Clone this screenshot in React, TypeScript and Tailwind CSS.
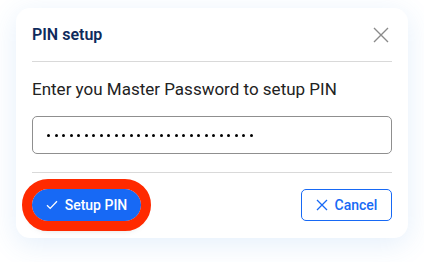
export default function App() {
  const dots = Array.from({ length: 28 });
  return (
    <div className="w-[424px] h-[262px] bg-white pt-2 px-4" style={{ fontFamily: "Roboto, 'Liberation Sans', sans-serif" }}>
      <div className="w-[392px] h-[230px] rounded-[14px] bg-white px-4 shadow-[0_6px_28px_rgba(66,140,230,0.14)]">
        {/* Header */}
        <div className="h-[54px] flex items-center justify-between border-b border-[#d9d9d9]">
          <span className="text-[16px] font-semibold text-[#0e2a5c]">PIN setup</span>
          <svg width="16" height="16" viewBox="0 0 16 16" className="mr-[3px]">
            <path d="M1 1L15 15M15 1L1 15" stroke="#8a8a8a" strokeWidth="1.4" />
          </svg>
        </div>

        {/* Body */}
        <div className="pt-[15px] pb-[18px] border-b border-[#d9d9d9]">
          <p className="text-[17px] leading-6 text-[#222]">Enter you Master Password to setup PIN</p>
          <div className="mt-[15px] h-[38px] rounded-[5px] border border-[#8f8f8f] flex items-center pl-[14px]">
            <div className="flex gap-[4.5px]">
              {dots.map((_, i) => (
                <span key={i} className="w-[3px] h-[3px] rounded-full bg-black" />
              ))}
            </div>
          </div>
        </div>

        {/* Footer */}
        <div className="pt-4 flex items-center justify-between">
          <div className="rounded-full outline-[10px] outline-solid outline-[#ff2a00] shadow-[0_6px_8px_rgba(0,0,0,0.35)]">
            <button className="h-8 w-[109px] rounded-full bg-[#1769f5] text-white text-[14px] font-medium flex items-center justify-center gap-[7px]">
              <svg width="12" height="10" viewBox="0 0 12 10">
                <path d="M1 5.2L4.2 8.4L11 1.2" stroke="white" strokeWidth="1.3" fill="none" />
              </svg>
              Setup PIN
            </button>
          </div>
          <button className="h-8 w-[91px] rounded-[5px] border border-[#1769f5] text-[#1769f5] text-[14px] font-medium flex items-center justify-center gap-[7px]">
            <svg width="12" height="12" viewBox="0 0 12 12">
              <path d="M1 1L11 11M11 1L1 11" stroke="#1769f5" strokeWidth="1.3" />
            </svg>
            Cancel
          </button>
        </div>
      </div>
    </div>
  );
}
